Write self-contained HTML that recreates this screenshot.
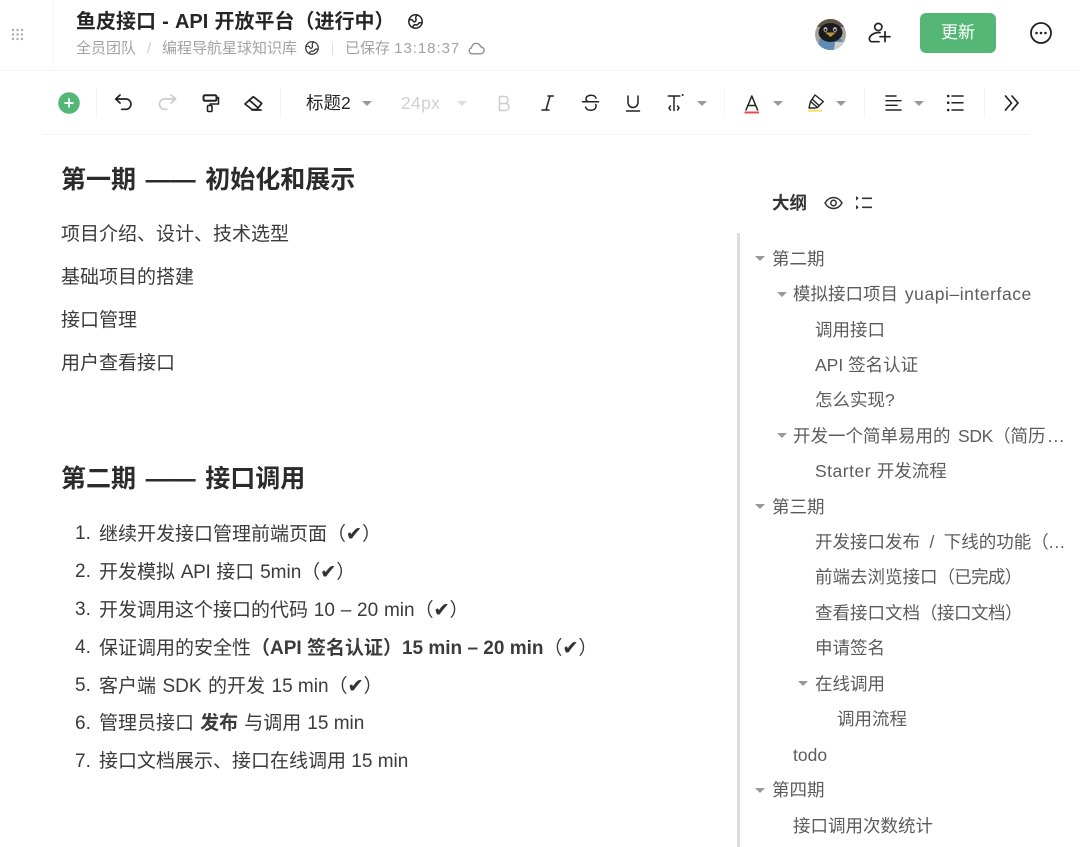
<!DOCTYPE html>
<html lang="zh"><head><meta charset="utf-8"><title>鱼皮接口</title>
<style>
html,body{margin:0;padding:0;background:#fff}
#p{position:relative;width:1080px;height:847px;overflow:hidden;background:#fff;font-family:"Liberation Sans","Noto Sans CJK SC",sans-serif;color:#3a3a3a}
.t{position:absolute;white-space:nowrap;line-height:24px;height:24px}
.h{font-size:25px;font-weight:700;color:#2b2b2b;line-height:34px;height:34px;word-spacing:2.7px}
.b{font-size:19px;color:#3b3b3b;word-spacing:.5px}
.o{font-size:17.5px;color:#5c5c5c}
.m{font-size:15px;color:#a3a3a3}
.r{position:absolute;background:#f3f3f3}
.c{position:absolute;width:0;height:0;border-left:5px solid transparent;border-right:5px solid transparent;border-top:5px solid #999}
.l{position:absolute;width:0;height:0;border-left:5px solid transparent;border-right:5px solid transparent;border-top:5.5px solid #999}
.k{font-family:"DejaVu Sans",sans-serif;color:#333;-webkit-text-stroke:.3px #333}
svg{position:absolute;overflow:visible;fill:none;stroke:#222;stroke-width:1.7;stroke-linecap:round;stroke-linejoin:round}
b{font-weight:700}
</style></head><body><div id="p">
<div class="r" style="left:0;top:70px;width:1080px;height:1px"></div>
<div class="r" style="left:53px;top:0;width:1px;height:70px;background:#f6f6f6"></div>
<div class="r" style="left:42px;top:134px;width:988px;height:1px"></div>

<svg style="left:10.5px;top:28px" width="14" height="14"><g fill="#aaa" stroke="none"><circle cx="2" cy="2" r="1.2"/><circle cx="6.500" cy="2" r="1.200"/><circle cx="11" cy="2" r="1.200"/><circle cx="2" cy="6.500" r="1.200"/><circle cx="6.500" cy="6.500" r="1.200"/><circle cx="11" cy="6.500" r="1.200"/><circle cx="2" cy="11" r="1.200"/><circle cx="6.500" cy="11" r="1.200"/><circle cx="11" cy="11" r="1.200"/></g></svg>

<div class="t" style="left:76px;top:10px;font-size:20px;font-weight:700;color:#262626;word-spacing:.6px">鱼皮接口 - API 开放平台（进行中）</div>
<svg style="left:408px;top:14px;stroke-width:1.500" width="15" height="15" viewBox="0 0 15 15"><circle cx="7.500" cy="7.500" r="6.700"/><path d="M1.500 6c1.500-.8 3-.5 3.500.8.400 1.200 1.800 1.500 2.600.4.700-1 .5-2 .2-3 -.2-1 .5-2.500 1.700-3.200M13.800 9c-1.500-.6-3-.3-3.600.9-.5 1-1.600 1.300-2.400.9-1-.4-2.300.2-2.800 1.800"/></svg>

<div class="t m" style="left:76px;top:37px">全员团队</div>
<div class="t m" style="left:147px;top:37px;color:#ccc">/</div>
<div class="t m" style="left:162px;top:37px">编程导航星球知识库</div>
<svg style="left:305px;top:41px;stroke-width:1.300;stroke:#333" width="14" height="14" viewBox="0 0 15 15"><circle cx="7.500" cy="7.500" r="6.700"/><path d="M1.500 6c1.500-.8 3-.5 3.500.8.400 1.200 1.800 1.500 2.600.4.700-1 .5-2 .2-3 -.2-1 .5-2.500 1.700-3.200M13.800 9c-1.500-.6-3-.3-3.600.9-.5 1-1.600 1.300-2.400.9-1-.4-2.300.2-2.800 1.800"/></svg>
<div class="r" style="left:332px;top:43px;width:1px;height:12px;background:#ddd"></div>
<div class="t m" style="left:345px;top:37px">已保存 <span style="letter-spacing:.95px">13:18:37</span></div>
<svg style="left:468px;top:42px;stroke:#8f8f8f;stroke-width:1.400" width="17" height="13" viewBox="0 0 17 13"><path d="M4 11.800a3 3 0 0 1-.6-5.900C4 3 6 1.300 8 1.300c2.300 0 4 1.300 4.600 3.500a3.500 3.500 0 0 1 0 7z"/></svg>

<svg style="left:815px;top:19px;stroke:none" width="31" height="31" viewBox="0 0 31 31"><defs><clipPath id="a"><circle cx="15.500" cy="15.500" r="15.500"/></clipPath></defs><g clip-path="url(#a)"><rect width="31" height="31" fill="#a8a59d"/><rect width="31" height="8" fill="#5f5647"/><path d="M3 31l1-11h23l1 11z" fill="#5e8db3"/><path d="M20 23h11v8H19z" fill="#cfcdc8"/><ellipse cx="15.500" cy="13.500" rx="12" ry="9.500" fill="#1c1c20"/><ellipse cx="10.500" cy="10.500" rx="2" ry="2.400" fill="#b8b8b8"/><ellipse cx="20" cy="10.500" rx="2" ry="2.400" fill="#b8b8b8"/><circle cx="10.500" cy="11" r="1" fill="#111"/><circle cx="20" cy="11" r="1" fill="#111"/><path d="M10 13.500h11l-5.500 4.500z" fill="#b8973a"/></g></svg>
<svg style="left:868px;top:21px;stroke-width:1.700" width="22" height="22" viewBox="0 0 22 22"><circle cx="10.300" cy="6" r="3.600"/><path d="M12 11.700C8 11 3 13 1.500 16.800c-.5 2 .5 3.900 2.400 3.900H11M17 10.700v10M12 15.700h10"/></svg>
<div style="position:absolute;left:920px;top:13px;width:76px;height:40px;background:#55b776;border-radius:6px;color:#fff;font-size:17px;line-height:40px;text-align:center">更新</div>
<svg style="left:1030px;top:22px;stroke-width:1.800" width="22" height="22" viewBox="0 0 22 22"><circle cx="11" cy="11" r="10"/><g fill="#222" stroke="none"><circle cx="6.500" cy="11" r="1.300"/><circle cx="11" cy="11" r="1.300"/><circle cx="15.500" cy="11" r="1.300"/></g></svg>

<svg style="left:58px;top:92px;stroke:#fff;stroke-width:1.800" width="22" height="22" viewBox="0 0 22 22"><circle cx="11" cy="11" r="10.800" fill="#55b776" stroke="none"/><path d="M11 7v8M7 11h8"/></svg>
<div class="r" style="left:96px;top:88px;width:1px;height:30px"></div>
<svg style="left:113px;top:93px" width="21" height="20" viewBox="0 0 21 20"><path d="M7 2 2.700 6 7 10M3 6h10.500a5.200 5.200 0 0 1 0 10.300H8.700"/></svg>
<svg style="left:156px;top:93px;stroke:#cccccc" width="21" height="20" viewBox="0 0 21 20"><path d="M15 2l4.700 4L15 10M19 6H8a5.300 5.200 0 0 0 0 10.300h3"/></svg>
<svg style="left:200px;top:93px;stroke-width:2" width="21" height="20" viewBox="0 0 21 20"><rect x="3.500" y="2.300" width="13" height="5.500" rx="1.500"/><path d="M16.500 4.500h2v6.500H10v1" stroke-width="1.500"/><rect x="7.500" y="12.500" width="4.500" height="6" rx="1" stroke-width="1.600"/></svg>
<svg style="left:243px;top:94px" width="20" height="18" viewBox="0 0 20 18"><path d="M10.300 2.700 18.700 9.300 14 15.500H9L2 10zM6.200 6l8.300 7.400M9 16h9"/></svg>
<div class="r" style="left:280px;top:88px;width:1px;height:30px"></div>
<div class="t" style="left:306px;top:91px;font-size:17.500px;color:#262626">标题2</div>
<div class="c" style="left:362px;top:101px"></div>
<div class="t" style="left:401px;top:91px;font-size:17.500px;color:#d0d0d0;letter-spacing:.3px">24px</div>
<div class="c" style="left:457px;top:101px;border-top-color:#ddd"></div>
<svg style="left:495px;top:93px;stroke:#cccccc;stroke-width:1.500" width="18" height="20" viewBox="0 0 18 20"><path d="M4.500 3.500h5a3.500 3.500 0 0 1 0 7h-5zM4.500 10.500h6a3.500 3.500 0 0 1 0 7h-6z"/></svg>
<svg style="left:540px;top:94px;stroke-width:1.500" width="15" height="18" viewBox="0 0 15 18"><path d="M8 2h5.300M2 16h7M10 2 6 16"/></svg>
<svg style="left:581px;top:93px;stroke-width:1.500" width="19" height="20" viewBox="0 0 19 20"><path d="M15 5.300c-.6-2-2.400-3-5-3-2.800 0-5 1.400-5 3.500 0 1.200.7 2.300 2 2.900M14.800 11.500c.4 1 .4 2 0 3-.7 1.800-2.700 2.700-5 2.700-2.600 0-4.500-1-5.200-3M1.500 8.700h16"/></svg>
<svg style="left:625px;top:94px;stroke-width:1.500" width="16" height="19" viewBox="0 0 16 19"><path d="M3 2v6.500a5 5 0 0 0 10 0V2M1.500 17h13"/></svg>
<svg style="left:665px;top:93px;stroke-width:1.500" width="21" height="20" viewBox="0 0 21 20"><path d="M3.300 3h11.500M9 3v14.500M5.500 13 4 15l1.500 2M12.500 13l1.500 2-1.500 2"/><circle cx="17.700" cy="2" r="1" fill="#222" stroke="none"/></svg>
<div class="c" style="left:696.500px;top:101px"></div>
<div class="r" style="left:724px;top:88px;width:1px;height:30px"></div>
<svg style="left:743px;top:94px;stroke-width:1.500" width="17" height="20" viewBox="0 0 17 20"><path d="M3 16 8.800 2l5.800 14M5 11.500h7.500"/><path d="M1.500 18.500h14.500" stroke="#e8484d" stroke-width="2" stroke-linecap="butt"/></svg>
<div class="c" style="left:773px;top:101px"></div>
<svg style="left:807px;top:93px;stroke-width:1.400" width="18" height="21" viewBox="0 0 18 21"><path d="M8 2 16.300 8.500 10.500 14.500 3.500 8.500zM3.500 8.500 2 15h6l2.500-.5M5.500 6.500l6.500 6"/><path d="M1 17.700h14" stroke="#f7df6a" stroke-width="2" stroke-linecap="butt"/></svg>
<div class="c" style="left:836px;top:101px"></div>
<div class="r" style="left:864px;top:88px;width:1px;height:30px"></div>
<svg style="left:885px;top:95px;stroke-width:1.400" width="17" height="17" viewBox="0 0 17 17"><path d="M1 1h10M1 5.700h15M1 10.300h11M1 15h15"/></svg>
<div class="c" style="left:913.500px;top:101px"></div>
<svg style="left:946px;top:95px;stroke-width:1.500" width="18" height="17" viewBox="0 0 18 17"><path d="M6 1h11M6 7.700h11M6 15h11"/><g fill="#222" stroke="none"><circle cx="2.200" cy="1" r="1.300"/><circle cx="2.200" cy="7.700" r="1.300"/><circle cx="2.200" cy="15" r="1.300"/></g></svg>
<div class="r" style="left:984px;top:88px;width:1px;height:30px"></div>
<svg style="left:1004px;top:95px" width="16" height="17" viewBox="0 0 16 17"><path d="M1.500 1l6 7-6 7M8 1l6 7-6 7"/></svg>

<div class="t h" style="left:61px;top:163px">第一期 —— 初始化和展示</div>
<div class="t b" style="left:61px;top:223px">项目介绍、设计、技术选型</div>
<div class="t b" style="left:61px;top:266px">基础项目的搭建</div>
<div class="t b" style="left:61px;top:309px">接口管理</div>
<div class="t b" style="left:61px;top:352px">用户查看接口</div>
<div class="t h" style="left:61px;top:462px">第二期 —— 接口调用</div>

<div class="t b" style="left:75px;top:522px">1.</div><div class="t b" style="left:99px;top:522px">继续开发接口管理前端页面（<span class="k">✔</span>）</div>
<div class="t b" style="left:75px;top:560px">2.</div><div class="t b" style="left:99px;top:560px">开发模拟 <span style="letter-spacing:-.3px">API</span> 接口 5min（<span class="k">✔</span>）</div>
<div class="t b" style="left:75px;top:598px">3.</div><div class="t b" style="left:99px;top:598px">开发调用这个接口的代码 10 – 20 min（<span class="k">✔</span>）</div>
<div class="t b" style="left:75px;top:636px">4.</div><div class="t b" style="left:99px;top:636px;word-spacing:0">保证调用的安全性<b>（API 签名认证）15 min – 20 min</b>（<span class="k">✔</span>）</div>
<div class="t b" style="left:75px;top:674px">5.</div><div class="t b" style="left:99px;top:674px;word-spacing:1.200px">客户端 SDK 的开发 <span style="word-spacing:0">15 min</span>（<span class="k">✔</span>）</div>
<div class="t b" style="left:75px;top:712px">6.</div><div class="t b" style="left:99px;top:712px;word-spacing:.8px">管理员接口 <b>发布</b> 与调用 <span style="word-spacing:0">15 min</span></div>
<div class="t b" style="left:75px;top:750px">7.</div><div class="t b" style="left:99px;top:750px;word-spacing:0">接口文档展示、接口在线调用 15 min</div>

<div class="t" style="left:772px;top:191px;font-size:17.500px;font-weight:700;color:#333">大纲</div>
<svg style="left:824px;top:195px;stroke-width:1.500;stroke:#333" width="19" height="16" viewBox="0 0 19 16"><path d="M1 8c2-3.500 5-5.500 8.500-5.500S16 4.500 18 8c-2 3.500-5 5.500-8.500 5.500S3 11.500 1 8z"/><circle cx="9.500" cy="8" r="2.700"/></svg>
<svg style="left:855px;top:195px;stroke-width:1.600;stroke:#333" width="18" height="16" viewBox="0 0 18 16"><path d="M7 3.300h10M7 12.300h10" stroke-linecap="butt"/><path d="M1 1 3.800 3.300 1 5.600zM1 10 3.800 12.300 1 14.600z" fill="#333" stroke="none"/></svg>
<div class="r" style="left:737px;top:233px;width:3px;height:614px;background:#dcdcdc"></div>

<div class="l" style="left:755px;top:256px"></div><div class="t o" style="left:772px;top:247px">第二期</div>
<div class="l" style="left:777px;top:292px"></div><div class="t o" style="left:793px;top:282px;word-spacing:2px">模拟接口项目 <span style="letter-spacing:.55px">yuapi–interface</span></div>
<div class="t o" style="left:815px;top:318px">调用接口</div>
<div class="t o" style="left:815px;top:353px">API 签名认证</div>
<div class="t o" style="left:815px;top:388px">怎么实现?</div>
<div class="l" style="left:777px;top:433px"></div><div class="t o" style="left:793px;top:424px;word-spacing:2.600px">开发一个简单易用的 <span style="letter-spacing:-.3px">SDK</span>（简历<span style="letter-spacing:1px;margin-left:2px">...</span></div>
<div class="t o" style="left:815px;top:459px;word-spacing:.4px"><span style="letter-spacing:.5px">Starter </span>开发流程</div>
<div class="l" style="left:755px;top:504px"></div><div class="t o" style="left:772px;top:495px">第三期</div>
<div class="t o" style="left:815px;top:530px;word-spacing:4.600px">开发接口发布 / 下线的功能（<span style="letter-spacing:.7px">...</span></div>
<div class="t o" style="left:815px;top:565px">前端去浏览接口<span style="letter-spacing:-.7px">（已完成）</span></div>
<div class="t o" style="left:815px;top:601px">查看接口文档<span style="letter-spacing:-.5px">（接口文档）</span></div>
<div class="t o" style="left:815px;top:636px">申请签名</div>
<div class="l" style="left:798px;top:681px"></div><div class="t o" style="left:815px;top:672px">在线调用</div>
<div class="t o" style="left:837px;top:707px">调用流程</div>
<div class="t o" style="left:793px;top:743px">todo</div>
<div class="l" style="left:755px;top:788px"></div><div class="t o" style="left:772px;top:778px">第四期</div>
<div class="t o" style="left:793px;top:814px">接口调用次数统计</div>
</div></body></html>
